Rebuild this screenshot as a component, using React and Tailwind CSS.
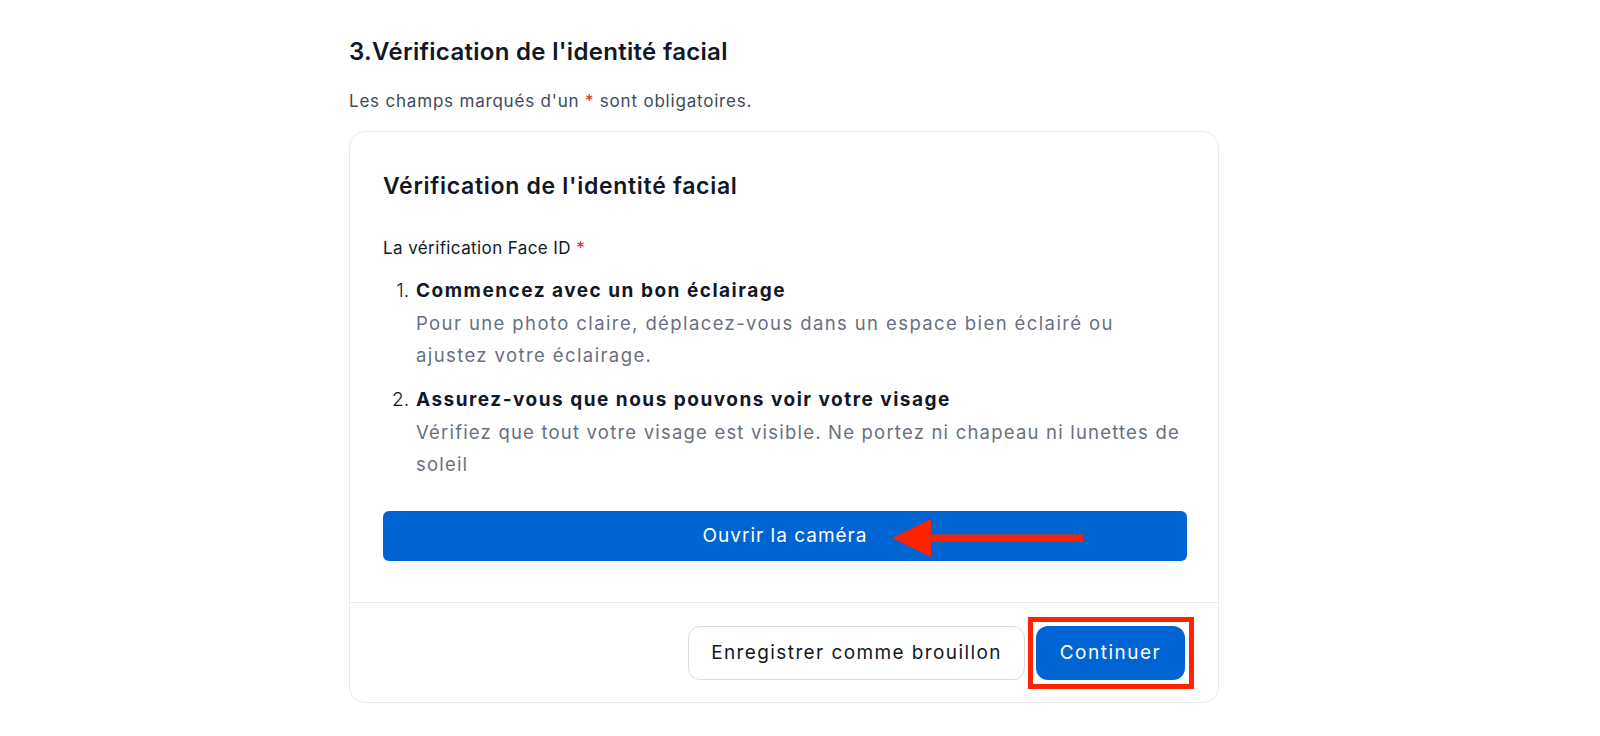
const Asterisk = () => <span className="text-[#e11d2e]">*</span>;

const steps = [
    {
        title: 'Commencez avec un bon éclairage',
        text: 'Pour une photo claire, déplacez-vous dans un espace bien éclairé ou ajustez votre éclairage.',
        spacing: 'tracking-[1.4px]'
    },
    {
        title: 'Assurez-vous que nous pouvons voir votre visage',
        text: 'Vérifiez que tout votre visage est visible. Ne portez ni chapeau ni lunettes de soleil',
        spacing: 'tracking-[1.2px]'
    }
];

const App = () => {
    return (
        <div
            className="min-h-[736px] bg-white text-[#111827]"
            style={{ fontFamily: 'Inter, "Noto Sans", sans-serif' }}
        >
            <div className="ml-[349px] w-[870px] pt-[36px]">
                <h2 className="text-[24px] leading-8 font-semibold tracking-[0.3px]">
                    3.Vérification de l'identité facial
                </h2>
                <p className="mt-[21px] text-[17px] leading-6 tracking-[0.8px] text-[#3f4a5c]">
                    Les champs marqués d'un <Asterisk /> sont obligatoires.
                </p>

                <div className="mt-[18px] rounded-2xl border border-[#e8eaee] bg-white">
                    <div className="px-[33px] pt-[38px] pb-[41px]">
                        <h3 className="text-[23px] leading-8 font-semibold tracking-[0.7px]">
                            Vérification de l'identité facial
                        </h3>

                        <p className="mt-[34px] text-[17px] leading-6 tracking-[0.4px]">
                            La vérification Face ID <Asterisk />
                        </p>

                        <ol className="mt-[15px] flex flex-col gap-[13px]">
                            {steps.map((step, i) => (
                                <li key={i} className="flex">
                                    <span className="w-[33px] text-right pr-[7px] text-[19px] leading-8 font-light">{i + 1}.</span>
                                    <div className="flex-1">
                                        <div className="font-bold text-[19px] leading-8 tracking-[1.5px]">{step.title}</div>
                                        <div className={`text-[#697080] text-[18.5px] leading-8 ${step.spacing}`}>{step.text}</div>
                                    </div>
                                </li>
                            ))}
                        </ol>

                        <div className="relative mt-[31px]">
                            <button className="w-[804px] h-[50px] rounded-md bg-[#0064d2] text-white text-[19px] tracking-[1px]">
                                Ouvrir la caméra
                            </button>
                            {/* annotation arrow */}
                            <svg
                                className="absolute left-[508px] top-[7px]"
                                width="194"
                                height="40"
                                viewBox="0 0 194 40"
                            >
                                <path d="M38 16.5 H192 V23.5 H38 Z" fill="#ff2200" />
                                <path d="M1 20 L40 1 L40 39 Z" fill="#ff2200" />
                            </svg>
                        </div>
                    </div>

                    <div className="border-t border-[#e8eaee] flex justify-end items-center gap-[11px] px-[33px] pt-[23px] pb-[22px]">
                        <button className="h-[54px] w-[337px] rounded-xl border border-[#d9dde3] bg-white text-[19px] tracking-[1.4px] text-[#111827]">
                            Enregistrer comme brouillon
                        </button>
                        <div className="relative">
                            <button className="h-[54px] w-[149px] rounded-xl bg-[#0064d2] text-white text-[19px] tracking-[1.5px]">
                                Continuer
                            </button>
                            <div className="absolute -left-[8px] -top-[9px] w-[166px] h-[72px] border-[5px] border-[#ff2200]" />
                        </div>
                    </div>
                </div>
            </div>
        </div>
    );
};

export default App;
